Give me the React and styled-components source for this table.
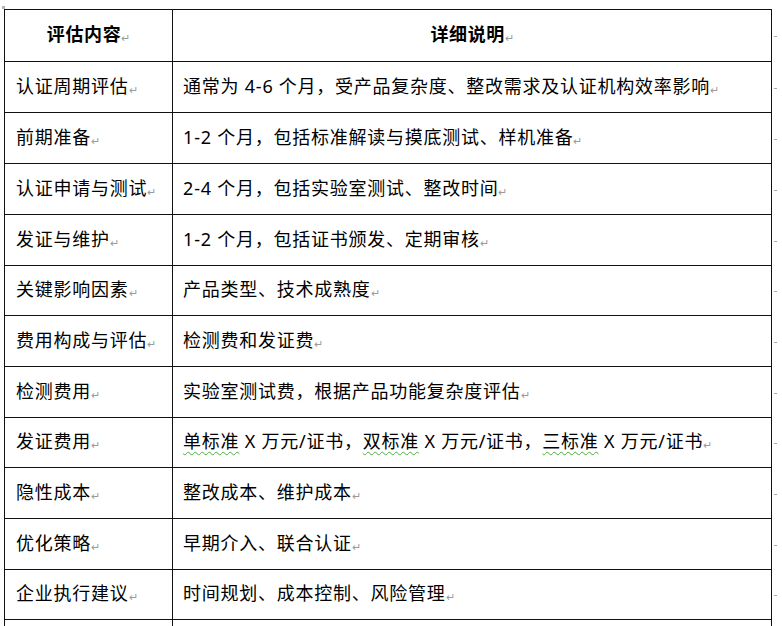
import React from "react";
import styled, { createGlobalStyle } from "styled-components";

const GlobalStyle = createGlobalStyle`
  html, body {
    margin: 0;
    padding: 0;
    background: #ffffff;
  }
  body {
    font-family: "Noto Sans", "Noto Sans CJK SC", sans-serif;
    color: #000;
  }
`;

const Page = styled.div`
  position: relative;
  width: 782px;
  height: 626px;
  overflow: hidden;
  padding: 9px 0 0 4px;
  box-sizing: border-box;
`;

const Handle = styled.div`
  position: absolute;
  left: 2px;
  top: 6px;
  width: 3px;
  height: 3px;
  background: #b5b5b5;
`;

const Table = styled.table`
  border-collapse: collapse;
  table-layout: fixed;
`;

const Row = styled.tr`
  height: ${(p) => p.$h}px;
`;

const Cell = styled.td`
  border: 1px solid #111;
  padding: 0 0 0 ${(p) => (p.$wide ? 10 : 11)}px;
  width: ${(p) => p.$w}px;
  box-sizing: border-box;
  vertical-align: middle;
  font-size: 18px;
  line-height: 20px;
  letter-spacing: 0.75px;
  white-space: nowrap;
  overflow: hidden;
`;

const HeadCell = styled(Cell).attrs({ as: "th" })`
  padding: 0;
  text-align: center;
  font-weight: 700;
  letter-spacing: 0.6px;
`;

const EndCell = styled.td`
  border: none;
  width: 7px;
  padding: 0 0 0 2px;
  vertical-align: middle;
`;

const EndMark = styled.span`
  display: block;
  width: 3px;
  height: 1px;
  background: #a8a8a8;
  margin-top: 2px;
`;

const Para = styled.span`
  display: inline-block;
  font-size: 11px;
  letter-spacing: 0;
  color: #9a9a9a;
  font-weight: 400;
  margin-left: 0;
  transform: translateY(1px);
`;

const Wavy = styled.span`
  text-decoration: underline wavy #4caf3c;
  text-decoration-thickness: 1px;
  text-underline-offset: 3px;
`;

const rows = [
  ["认证周期评估", "通常为 4-6 个月，受产品复杂度、整改需求及认证机构效率影响"],
  ["前期准备", "1-2 个月，包括标准解读与摸底测试、样机准备"],
  ["认证申请与测试", "2-4 个月，包括实验室测试、整改时间"],
  ["发证与维护", "1-2 个月，包括证书颁发、定期审核"],
  ["关键影响因素", "产品类型、技术成熟度"],
  ["费用构成与评估", "检测费和发证费"],
  ["检测费用", "实验室测试费，根据产品功能复杂度评估"],
  [
    "发证费用",
    <>
      <Wavy>单标准</Wavy> X 万元/证书，<Wavy>双标准</Wavy> X 万元/证书，
      <Wavy>三标准</Wavy> X 万元/证书
    </>,
  ],
  ["隐性成本", "整改成本、维护成本"],
  ["优化策略", "早期介入、联合认证"],
  ["企业执行建议", "时间规划、成本控制、风险管理"],
];

const heights = [51, 51, 51, 51, 50, 51, 51, 50, 51, 51, 50];

export default function App() {
  return (
    <>
      <GlobalStyle />
      <Page>
        <Handle />
        <Table>
          <tbody>
            <Row $h={52}>
              <HeadCell $w={169}>
                评估内容<Para>↵</Para>
              </HeadCell>
              <HeadCell $w={602}>
                详细说明<Para>↵</Para>
              </HeadCell>
              <EndCell>
                <EndMark />
              </EndCell>
            </Row>
            {rows.map(([k, v], i) => (
              <Row key={i} $h={heights[i]}>
                <Cell $w={169}>
                  {k}
                  <Para>↵</Para>
                </Cell>
                <Cell $w={602} $wide>
                  {v}
                  <Para>↵</Para>
                </Cell>
                <EndCell>
                  <EndMark />
                </EndCell>
              </Row>
            ))}
            <Row $h={50}>
              <Cell $w={169} />
              <Cell $w={602} $wide />
              <EndCell />
            </Row>
          </tbody>
        </Table>
      </Page>
    </>
  );
}
